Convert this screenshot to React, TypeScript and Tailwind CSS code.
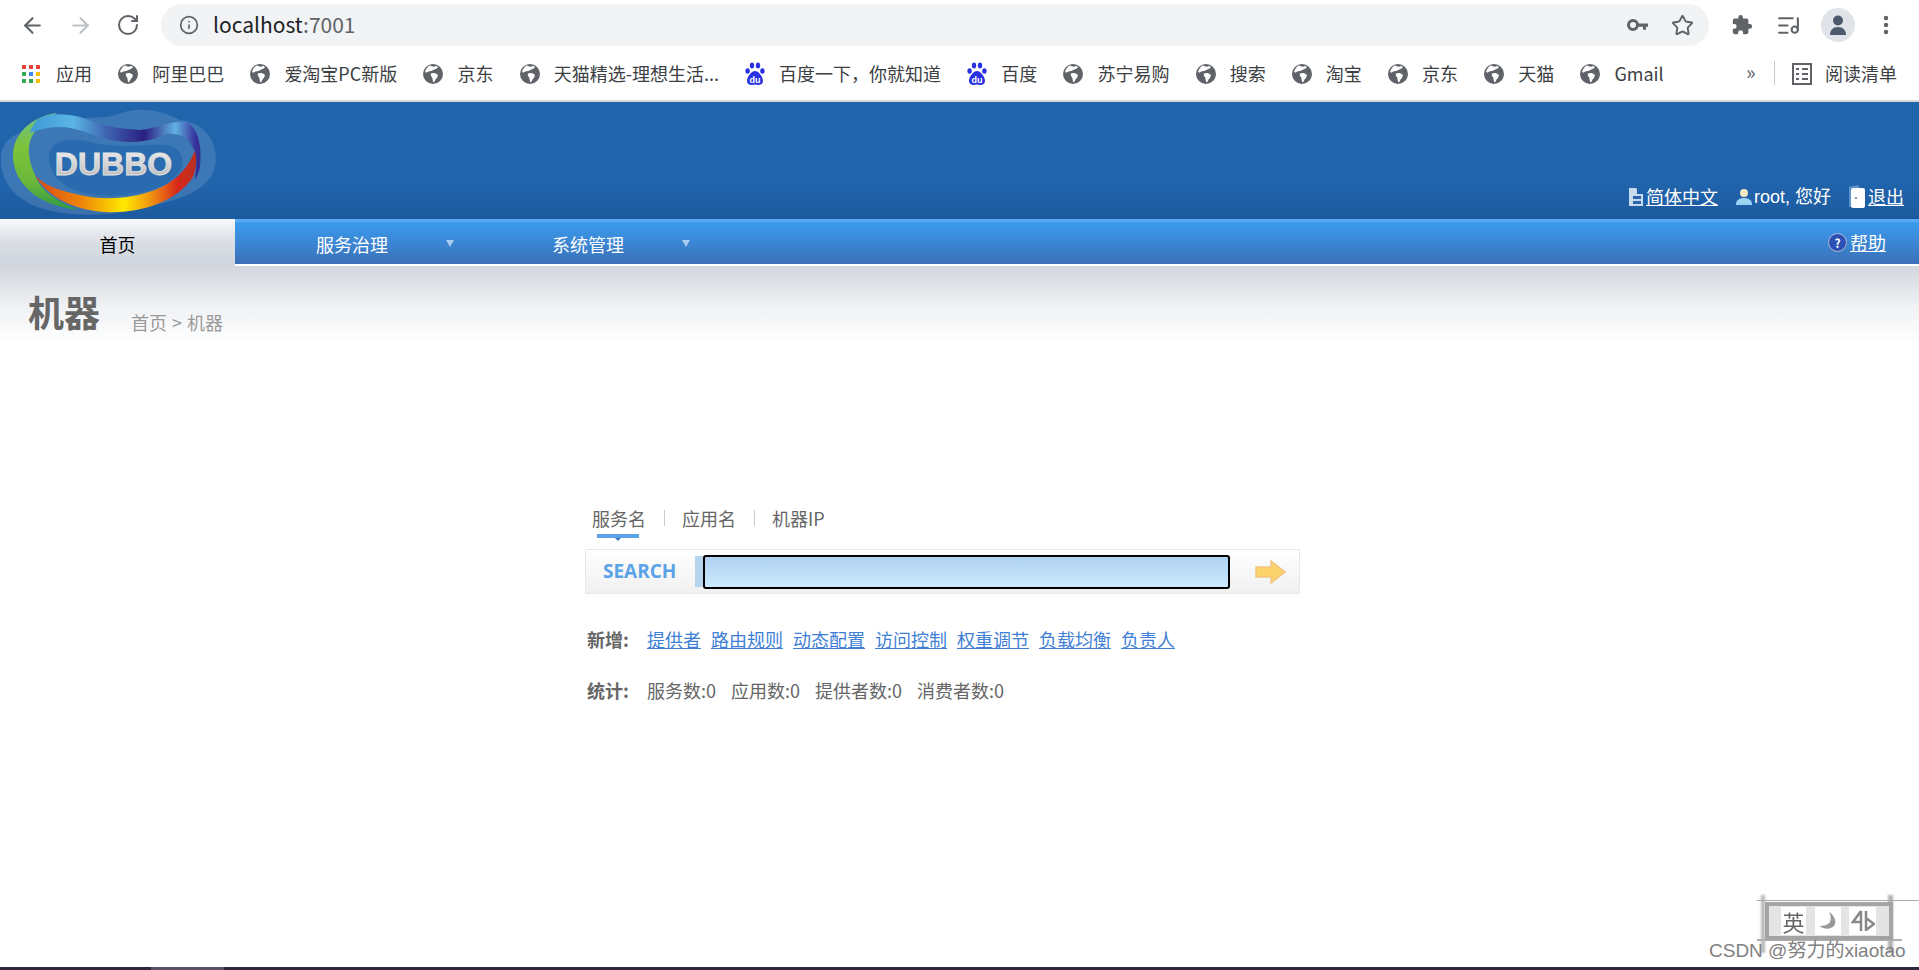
import React from "react";
import { ArrowLeft, ArrowRight, RotateCw, Info, Star, ListMusic, MoreVertical } from "lucide-react";

const font = { fontFamily: '"Noto Sans CJK SC", "Liberation Sans", sans-serif' };

function Globe() {
  return (
    <svg width="20" height="20" viewBox="0 0 20 20" className="shrink-0">
      <circle cx="10" cy="10" r="10" fill="#5f6368" />
      <path d="M7 1.2 C9 3 12 3 13.5 1.8 L15 3.5 C13 5 11 5.5 9.5 6.5 C8 7.5 5 7 3.5 8.5 C2.5 9.5 3 8 2 7.5 C3 4.5 5 2.3 7 1.2Z" fill="#fff" />
      <path d="M8 9.5 C10 8.5 13 9 14.5 10.5 C15.5 11.8 14 14 12.5 15.5 L11 18.5 C10 18 9.5 16 9.5 14.5 C9.5 13 7 12 8 9.5Z" fill="#fff" />
    </svg>
  );
}

function Baidu() {
  return (
    <div className="relative w-[20px] h-[24px] shrink-0">
      <svg width="20" height="24" viewBox="0 0 20 24">
        <ellipse cx="7" cy="3.5" rx="2.2" ry="3" fill="#2932e1" />
        <ellipse cx="13" cy="3.5" rx="2.2" ry="3" fill="#2932e1" />
        <ellipse cx="2.6" cy="9" rx="2.2" ry="2.8" fill="#2932e1" />
        <ellipse cx="17.4" cy="9" rx="2.2" ry="2.8" fill="#2932e1" />
        <path d="M10 9 C13 9 18 14 18 19 C18 23 14 23.5 10 22.5 C6 23.5 2 23 2 19 C2 14 7 9 10 9Z" fill="#2932e1" />
        <text x="10" y="21" textAnchor="middle" fontSize="9" fontWeight="700" fill="#fff" fontFamily="Liberation Sans">du</text>
      </svg>
    </div>
  );
}

function Apps() {
  const c = ["#ea4335", "#ea4335", "#ea4335", "#34a853", "#4285f4", "#fbbc05", "#34a853", "#34a853", "#fbbc05"];
  return (
    <div className="grid grid-cols-3 gap-[3px] w-[18px] shrink-0">
      {c.map((x, i) => (
        <div key={i} className="w-[4px] h-[4px]" style={{ background: x }} />
      ))}
    </div>
  );
}

const marks: [string, string][] = [
  ["g", "阿里巴巴"],
  ["g", "爱淘宝PC新版"],
  ["g", "京东"],
  ["g", "天猫精选-理想生活..."],
  ["b", "百度一下，你就知道"],
  ["b", "百度"],
  ["g", "苏宁易购"],
  ["g", "搜索"],
  ["g", "淘宝"],
  ["g", "京东"],
  ["g", "天猫"],
  ["g", "Gmail"],
];

function Logo() {
  return (
    <svg width="218" height="117" viewBox="0 0 218 117" className="shrink-0">
      <defs>
        <linearGradient id="green" x1="0" y1="0" x2="0" y2="1">
          <stop offset="0" stopColor="#6fc08a" />
          <stop offset="0.35" stopColor="#7cc33a" />
          <stop offset="0.7" stopColor="#6cb83a" />
          <stop offset="1" stopColor="#2f9a45" />
        </linearGradient>
        <linearGradient id="ring" x1="35" y1="0" x2="197" y2="0" gradientUnits="userSpaceOnUse">
          <stop offset="0" stopColor="#d8481a" />
          <stop offset="0.3" stopColor="#ee8a08" />
          <stop offset="0.55" stopColor="#ffea00" />
          <stop offset="0.72" stopColor="#f09010" />
          <stop offset="0.88" stopColor="#d8281a" />
          <stop offset="1" stopColor="#b83020" />
        </linearGradient>
        <linearGradient id="top" x1="30" y1="0" x2="203" y2="0" gradientUnits="userSpaceOnUse">
          <stop offset="0" stopColor="#3f9ad6" />
          <stop offset="0.25" stopColor="#5ab4e4" />
          <stop offset="0.45" stopColor="#3e62b0" />
          <stop offset="0.66" stopColor="#2a1f80" />
          <stop offset="0.84" stopColor="#62b2e2" />
          <stop offset="0.96" stopColor="#35309a" />
          <stop offset="1" stopColor="#3a2a88" />
        </linearGradient>
        <linearGradient id="txt" x1="0" y1="0" x2="0" y2="1">
          <stop offset="0" stopColor="#f2f2f2" />
          <stop offset="1" stopColor="#b4b4b4" />
        </linearGradient>
      </defs>
      <path d="M1 58 C1 42 10 32 30 28 C60 10 100 20 118 12 C140 4 160 8 180 18 C200 20 216 34 216 58 C214 84 190 96 150 104 C110 116 60 116 30 102 C12 92 1 78 1 58Z" fill="#ffffff" opacity="0.13" />
      <path d="M50 62 C44 40 66 34 90 40 C120 48 150 40 172 44 C186 52 188 68 166 82 C140 96 96 96 74 88 C60 82 52 74 50 62Z" fill="#2064ac" opacity="0.65" />
      <path d="M35 73 C45 92 70 108 105 110 C135 112 175 102 193 75 C197 65 197 55 195 48 C190 62 180 78 155 88 C130 97 105 98 85 94 C65 90 45 85 35 73Z" fill="url(#ring)" />
      <path d="M57 11 C32 14 12 32 13 55 C14 80 35 103 78 108 C55 98 40 88 35 73 C28 58 26 42 34 31 C40 22 50 15 57 11Z" fill="url(#green)" />
      <path d="M37 18 C45 12 60 10 80 15 C95 20 105 26 140 28 C155 27 170 18 187 20 C195 25 203 38 200 65 C198 72 197 75 195 78 C197 60 197 50 193 46 C188 36 180 31 167 32 C150 40 130 42 110 38 C90 32 75 25 60 25 C48 25 38 28 30 31 C31 26 34 22 37 18Z" fill="url(#top)" />
      <text x="113.5" y="73" textAnchor="middle" fontSize="32" fontWeight="700" fill="url(#txt)" stroke="#e4e4e4" strokeWidth="0.8" fontFamily="Liberation Sans">DUBBO</text>
    </svg>
  );
}

function Arrow() {
  return <span className="w-0 h-0 border-x-[4px] border-x-transparent border-t-[7px] border-t-[#a8cdf3]" />;
}

const addLinks = ["提供者", "路由规则", "动态配置", "访问控制", "权重调节", "负载均衡", "负责人"];
const stats = ["服务数:0", "应用数:0", "提供者数:0", "消费者数:0"];

export default function App() {
  return (
    <div className="relative flex flex-col w-[1919px] h-[970px] overflow-hidden bg-white" style={font}>
      <div className="flex items-center h-[50px] pl-[20px] shrink-0 text-[#5f6368]">
        <ArrowLeft size={25} strokeWidth={2} />
        <ArrowRight size={25} strokeWidth={2} className="ml-[23px] text-[#bdc1c6]" />
        <RotateCw size={24} strokeWidth={2} className="ml-[23px]" />
        <div className="flex items-center ml-[21px] w-[1548px] h-[42px] rounded-full bg-[#f1f3f4] pl-[18px] pr-[15px]">
          <Info size={20} strokeWidth={2} />
          <span className="ml-[14px] text-[21px] text-[#202124]">localhost<span className="text-[#5f6368]">:7001</span></span>
          <svg width="22" height="14" viewBox="0 0 22 14" className="ml-auto">
            <circle cx="6" cy="7" r="4.5" fill="none" stroke="#5f6368" strokeWidth="3" />
            <path d="M10 5.5h11v3.2h-2v3h-3v-3h-6z" fill="#5f6368" />
          </svg>
          <Star size={23} strokeWidth={2} className="ml-[22px]" />
        </div>
        <svg width="22" height="24" viewBox="0 0 24 24" className="ml-[22px]" fill="#5f6368">
          <path d="M20.5 11H19V7a2 2 0 0 0-2-2h-4V3.5a2.5 2.5 0 0 0-5 0V5H4a2 2 0 0 0-2 2v3.8h1.5a2.7 2.7 0 0 1 0 5.4H2V20a2 2 0 0 0 2 2h3.8v-1.5a2.7 2.7 0 0 1 5.4 0V22H17a2 2 0 0 0 2-2v-4h1.5a2.5 2.5 0 0 0 0-5z" />
        </svg>
        <ListMusic size={25} strokeWidth={2} className="ml-[23px]" />
        <div className="flex items-center justify-center ml-[20px] w-[34px] h-[34px] rounded-full bg-[#e0e3e7]">
          <svg width="18" height="22" viewBox="0 0 18 22" fill="#4d5a6c">
            <circle cx="9" cy="6.5" r="5" />
            <path d="M1 21c0-5 3-8 8-8s8 3 8 8z" />
          </svg>
        </div>
        <MoreVertical size={24} strokeWidth={2.5} className="ml-[19px]" />
      </div>

      <div className="relative flex items-center h-[50px] pl-[22px] pb-[2px] shrink-0 text-[18px] text-[#3c4043] gap-[26.2px]">
        <div className="flex items-center gap-[16px]">
          <Apps />
          <span className="mb-[2px]">应用</span>
        </div>
        {marks.map(([k, t], i) => (
          <div key={i} className="flex items-center gap-[14px] whitespace-nowrap">
            {k === "g" ? <Globe /> : <Baidu />}
            <span className="mb-[2px]">{t}</span>
          </div>
        ))}
        <span className="absolute left-[1746px] top-[7px] text-[20px] text-[#5f6368]">»</span>
        <div className="absolute left-[1774px] top-[11px] w-px h-[24px] bg-[#c8cacd]" />
        <div className="absolute left-[1792px] top-[10px] flex items-center gap-[13px]">
          <svg width="20" height="22" viewBox="0 0 20 22" fill="none" stroke="#5f6368" strokeWidth="2">
            <rect x="1" y="1" width="18" height="20" />
            <path d="M4 6h3M4 11h3M4 16h3M10 6h6M10 11h6M10 16h6" />
          </svg>
          <span className="whitespace-nowrap">阅读清单</span>
        </div>
      </div>
      <div className="h-[2px] bg-[#d5d7da] shrink-0" />

      <div className="flex items-end justify-between h-[117px] shrink-0 bg-gradient-to-b from-[#2064ac] from-70% to-[#1d5a9e] text-white text-[18px]">
        <Logo />
        <div className="flex items-center pr-[15px] pb-[8px] whitespace-nowrap">
          <svg width="16" height="20" viewBox="0 0 16 20" className="mr-[2px]">
            <path d="M1 1h7l1 1v5h6v12H1z" fill="#c8daee" />
            <path d="M5 9h8v3H5zM5 14h8v3H5z" fill="#2a66ad" />
          </svg>
          <span className="underline">简体中文</span>
          <svg width="16" height="19" viewBox="0 0 16 19" className="ml-[18px] mr-[2px]">
            <circle cx="8" cy="6" r="4" fill="#f4e8c4" />
            <path d="M0 18c0-5 3-7 8-7s8 2 8 7z" fill="#9ad2f2" />
          </svg>
          <span className="mt-[2px]" style={{ fontFamily: '"Liberation Sans", "Noto Sans CJK SC", sans-serif' }}>root, 您好</span>
          <svg width="18" height="24" viewBox="0 0 18 24" className="ml-[17px] mr-[2px]">
            <path d="M1 2 L10 0 L12 3 L2 4z" fill="#5f93cc" />
            <rect x="3" y="3" width="14" height="20" rx="2" fill="#fff" />
            <rect x="1" y="2" width="2" height="20" fill="#5f93cc" />
            <circle cx="8" cy="13" r="1" fill="#4a7ab0" />
          </svg>
          <span className="underline">退出</span>
        </div>
      </div>

      <div className="flex h-[47px] shrink-0 text-[18px] text-white">
        <div className="flex items-center justify-center w-[235px] pt-[4px] text-black bg-gradient-to-b from-[#f8f9fb] via-[#d9dde4] via-50% to-[#d0d6df]">首页</div>
        <div className="relative flex-1 flex items-center pt-[3px] border-t-[3px] border-t-[#58a8f2] border-b-2 border-b-white bg-gradient-to-b from-[#3a9cf0] to-[#3a70b8]">
          <div className="flex items-center w-[235px] pl-[81px]">
            <span>服务治理</span>
            <span className="ml-[58px] mb-[2px] flex"><Arrow /></span>
          </div>
          <div className="flex items-center w-[235px] pl-[82px]">
            <span>系统管理</span>
            <span className="ml-[58px] mb-[2px] flex"><Arrow /></span>
          </div>
          <div className="ml-auto flex items-center pr-[33px] pb-[4px]">
            <span className="flex items-center justify-center w-[19px] h-[19px] rounded-full bg-[#2d50b4] border border-[#b4bcd0] text-[12px] font-bold mr-[3px]">?</span>
            <span className="underline">帮助</span>
          </div>
        </div>
      </div>

      <div className="relative flex-1 flex flex-col">
        <div className="flex items-end h-[76px] pl-[28px] pb-[7px] bg-gradient-to-b from-[#d2d6dd] via-[#eef0f3] via-50% to-white">
          <h1 className="text-[36px] leading-[48px] font-bold text-[#666]">机器</h1>
          <span className="ml-[31px] text-[18px] leading-[26px] text-[#999]">首页<span className="mx-[5px]">&gt;</span>机器</span>
        </div>

        <div className="flex flex-col w-[715px] ml-[585px] mt-[161px]">
          <div className="flex items-center pl-[7px] h-[30px] text-[18px] text-[#666]">
            <span>服务名</span>
            <span className="ml-[18px] mr-[17px] w-px h-[16px] bg-[#ccc]" />
            <span>应用名</span>
            <span className="ml-[18px] mr-[17px] w-px h-[16px] bg-[#ccc]" />
            <span>机器IP</span>
          </div>
          <div className="flex flex-col items-center w-[42px] ml-[12px] mt-[1px] h-[15px]">
            <div className="w-full h-[4px] bg-[#5ba3e8]" />
            <div className="w-0 h-0 border-x-[3px] border-x-transparent border-t-[3px] border-t-[#3d7cc0]" />
          </div>
          <div className="flex items-center h-[45px] border border-[#e8e8e8] bg-gradient-to-b from-white to-[#f0f0f0] pl-[17px]">
            <span className="w-[92px] text-[19px] font-bold text-[#5ba3e8]" style={{ fontFamily: '"Open Sans", sans-serif' }}>SEARCH</span>
            <div className="w-[8px] h-[31px] bg-[#b5d4ee]" />
            <div className="w-[527px] h-[34px] border-2 border-black rounded-[3px] bg-gradient-to-b from-[#b0d2f3] to-[#cbe9fd]" />
            <svg width="31" height="24" viewBox="0 0 31 24" className="ml-[25px]">
              <path d="M1 7h15V1l14 11-14 11v-6H1z" fill="#fbd36a" stroke="#f2c580" strokeWidth="1.5" />
            </svg>
          </div>
          <div className="flex items-center mt-[31px] h-[28px] pl-[2px] text-[18px] whitespace-nowrap">
            <b className="text-[#666] w-[60px]">新增:</b>
            <div className="flex gap-[10px]">
              {addLinks.map((t) => (
                <span key={t} className="underline text-[#3f7fd6]">{t}</span>
              ))}
            </div>
          </div>
          <div className="flex items-center mt-[23px] h-[28px] pl-[2px] text-[18px] whitespace-nowrap text-[#666]">
            <b className="w-[60px]">统计:</b>
            <div className="flex gap-[15px]">
              {stats.map((t) => (
                <span key={t}>{t}</span>
              ))}
            </div>
          </div>
        </div>
      </div>

      <div className="absolute left-[1761px] top-[895px] w-[4px] h-[58px] bg-[#b8b8b8] blur-[1px]" />
      <div className="absolute left-[1888px] top-[895px] w-[5px] h-[58px] bg-[#b0b0b0] blur-[1px]" />
      <div className="absolute left-[1757px] top-[900px] w-[162px] h-[1px] bg-[#aaa]" />
      <div className="absolute left-[1757px] top-[939px] w-[145px] h-[2px] bg-[#b0b0b0] blur-[0.5px]" />
      <div className="absolute left-[1765px] top-[902px] w-[128px] h-[38px] border-[4px] border-[#a4a4a4] blur-[0.4px] flex items-center justify-between pl-[12px] pr-[13px] bg-[#e4e4e4] text-[#666]">
        <div className="flex items-center justify-center w-[25px] h-[28px] bg-white text-[22px] leading-none" style={{ fontFamily: '"Noto Sans CJK SC", serif' }}>英</div>
        <div className="flex items-center justify-center w-[26px] h-[28px] bg-white">
          <svg width="20" height="20" viewBox="0 0 20 20" fill="#999">
            <path d="M11 1 C17 5 19 11 16 15 C12 19 6 18 1 15 C6 15 10 14 12 11 C13 8 13 4 11 1Z" />
          </svg>
        </div>
        <div className="flex items-center justify-center w-[27px] h-[28px] bg-white">
          <svg width="24" height="22" viewBox="0 0 24 22" fill="none" stroke="#888" strokeWidth="2.5">
            <path d="M10 1 L2 12 L10 12 M10 1 V21 M15 1 V21 M15 8 L23 14 L15 20" />
          </svg>
        </div>
      </div>
      <div className="absolute left-[1709px] top-[939px] text-[19px] leading-[24px] text-[#808080] whitespace-nowrap" style={{ fontFamily: '"Liberation Sans", "Noto Sans CJK SC", sans-serif' }}>CSDN @努力的xiaotao</div>
      <div className="absolute left-0 bottom-0 w-full h-[3px] bg-[#2f2640]">
        <div className="absolute left-[151px] top-0 w-[73px] h-full bg-[#5b5268]" />
      </div>
    </div>
  );
}
